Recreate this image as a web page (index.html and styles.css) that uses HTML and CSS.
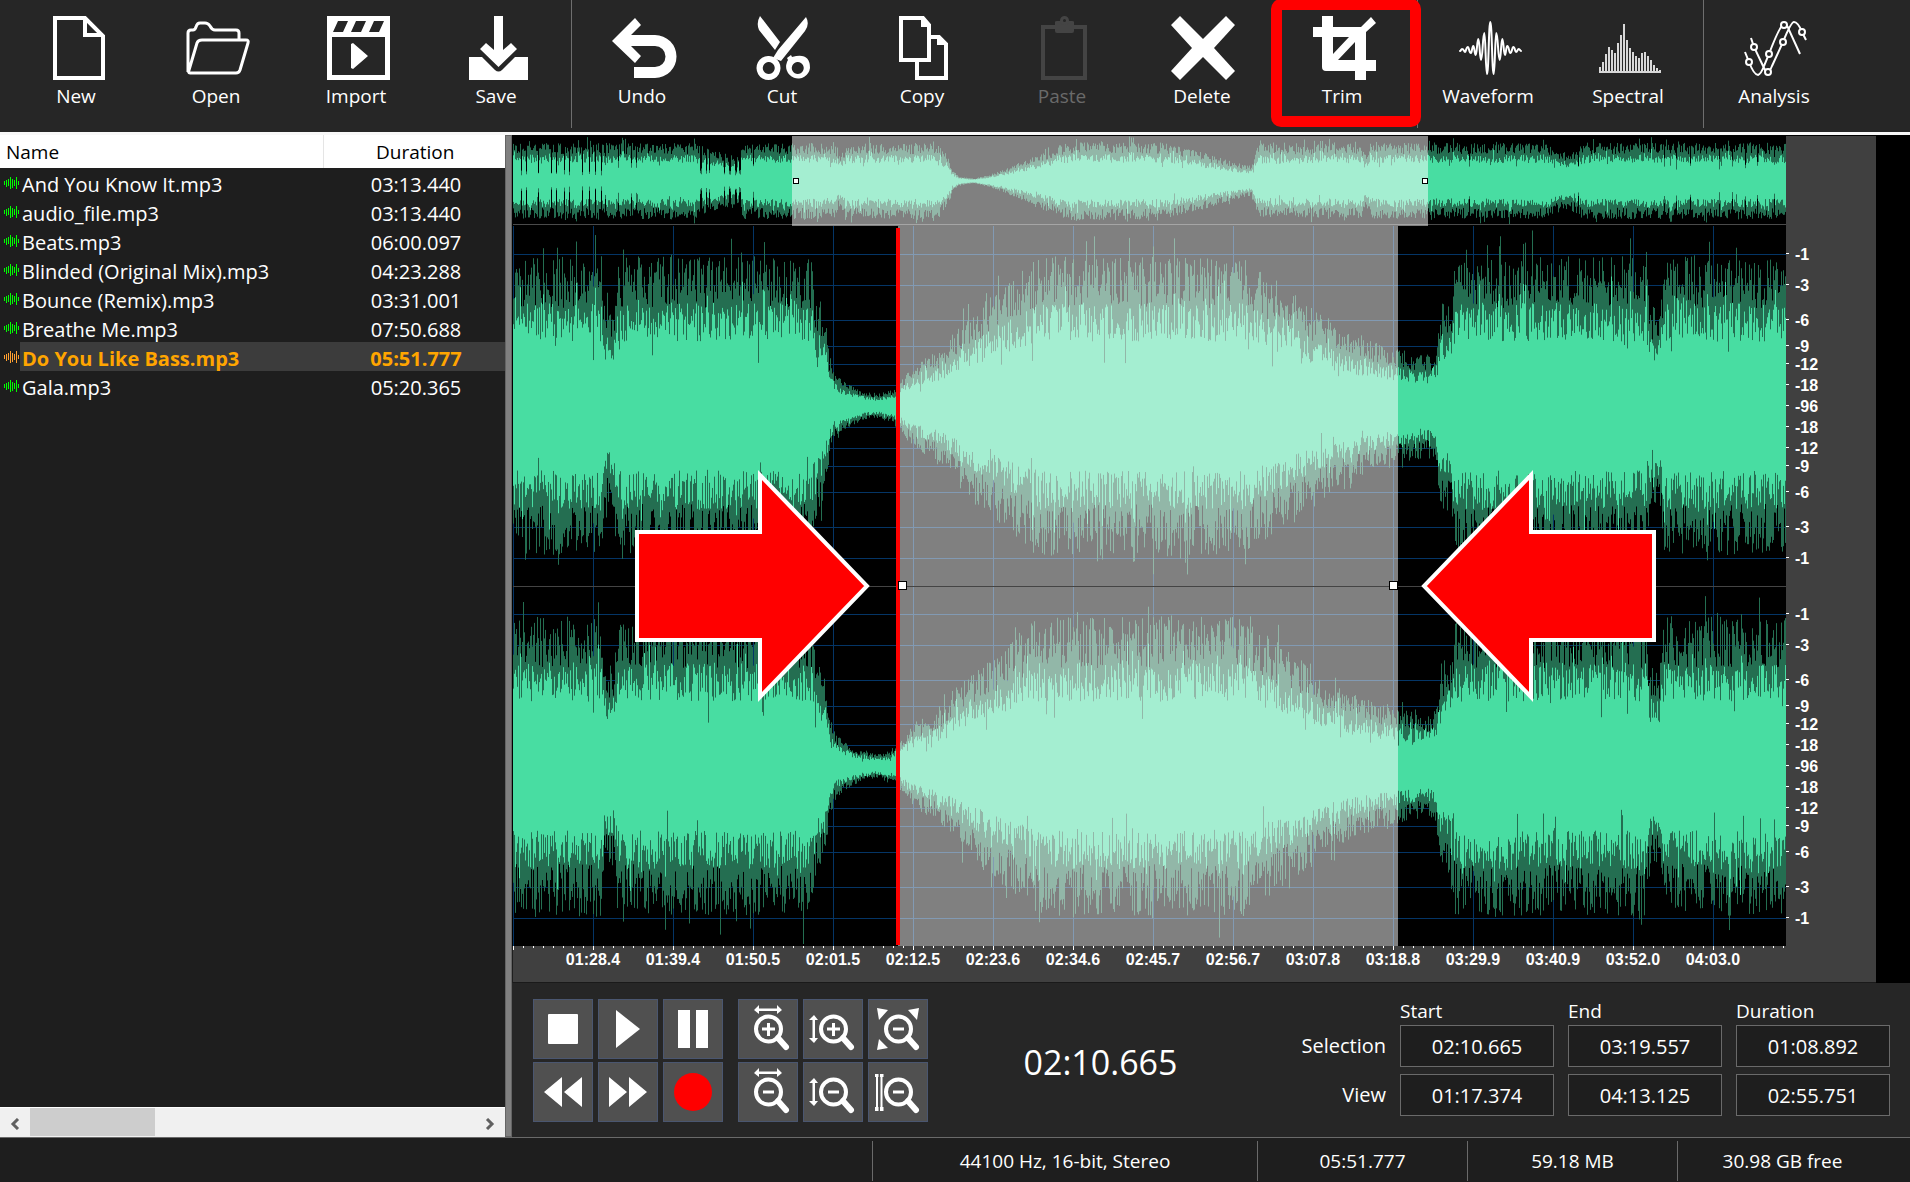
FILE: index.html
```
<!DOCTYPE html>
<html lang="en">

<head>
  <meta charset="UTF-8">
  <meta name="viewport" content="width=device-width, initial-scale=1.0">
  <title>Audio Editor</title>
  <link rel="stylesheet" href="styles.css">
</head>

<body>
  <header class="toolbar">
    <div class="group">
      <button class="tool"><svg viewBox="0 0 64 64" class="line">
          <path stroke-width="4" d="M11 2H41L59 20V62H11ZM41 2V19H59" />
        </svg>New</button>
      <button class="tool"><svg viewBox="0 0 64 64" class="line">
          <path stroke-width="3" stroke-linejoin="round" d="M4 56V17Q4 14 7 14H9Q11 14 12 11Q13 7 16 7H21Q24 7 26 10Q28 14 31 14H52Q55 14 55 17V23M18 24H62Q65 24 64 27L56 54Q55 57 52 57H6Q4 57 5 54L13 27Q14 24 18 24Z" />
        </svg>Open</button>
      <button class="tool"><svg viewBox="0 0 64 64">
          <path fill-rule="evenodd" d="M3 0H66V64H3ZM8 21V59H61V21ZM9 16H19L24 5H14ZM27 16H37L42 5H32ZM45 16H55L60 5H50ZM27 28L29 27 44 40 29 53 27 52Z" />
        </svg>Import</button>
      <button class="tool"><svg viewBox="0 0 64 64">
          <path d="M30 0H39V34L47 27 53 33 34.5 51 16 33 22 27 30 34ZM5 41H18L31 54Q34.5 57 38 54L51 41H64V64H5Z" />
        </svg>Save</button>
    </div>
    <div class="group">
      <button class="tool"><svg viewBox="0 0 64 64">
          <path d="M2 25L25 2 31 9 21 19H45A21.5 21.5 0 0 1 45 62H24V51H45A10 10 0 0 0 45 30H21L31 40 25 47Z" />
        </svg>Undo</button>
      <button class="tool"><svg viewBox="0 0 64 64">
          <path d="M10 0L30 26 25 34 9 14Q6 7 10 0ZM56 1Q60 8 55 15L31 45 23 42 28 34Z" />
          <path fill-rule="evenodd" d="M19 40A12 12 0 1 1 18 40ZM18.5 46A6 6 0 1 0 19 46ZM38 44L37 42 41 39 42 41Q60 36 60 52A12 12 0 1 1 38 44ZM47.5 46A6 6 0 1 0 48 46Z" />
        </svg>Cut</button>
      <button class="tool"><svg viewBox="0 0 64 64" class="line">
          <path stroke-width="4" d="M11 2H33L39 9V44H11ZM27 45V62H56V28L49 21H41" />
          <path class="solid" d="M31 1V11H41ZM47 20V29H58Z" />
        </svg>Copy</button>
      <button class="tool" disabled><svg viewBox="0 0 64 64" class="line">
          <path stroke-width="4" d="M13 11H55V62H13Z" />
          <path class="solid" d="M25 6Q25 5 27 5H42Q44 5 44 6V15Q44 17 42 17H27Q25 17 25 15Z" />
          <circle cx="34.5" cy="4.5" r="3" stroke-width="3" class="hole" />
        </svg>Paste</button>
      <button class="tool"><svg viewBox="0 0 64 64">
          <path d="M10 0L33 23 56 0 65 9 44 32 65 55 56 64 33 41 10 64 1 55 22 32 1 9Z" />
        </svg>Delete</button>
      <button class="tool marked"><svg viewBox="0 0 64 64">
          <path fill-rule="evenodd" d="M12 0H23V11H51L61 1 66 7 56 16V44H66V55H56V64H45V55H16Q12 55 12 51V21H3V11H12ZM23 21V38L39 21ZM45 26L28 44H45Z" />
        </svg>Trim</button>
    </div>
    <div class="group">
      <button class="tool"><svg viewBox="0 0 64 64" class="line">
          <path stroke-width="2" stroke-linecap="round" d="M4 35C5 35 5 33 6 33C8 33 8 36 9 36C10 36 10 31 12 31C13 31 13 37 15 37C16 37 16 30 17.3 30C18.5 30 18.5 39 19.7 39C21 39 21 23 22.3 23C23.7 23 23.7 44 25 44C26.7 44 26.7 17 28.3 17C29.6 17 29.6 58 31 58C32.7 58 32.7 6 34.3 6C36 6 36 58 37.7 58C39 58 39 17 40.3 17C42 17 42 44 43.7 44C45 44 45 23 46.3 23C47.6 23 47.6 39 49 39C50 39 50 30 51.3 30C53 30 53 37 54.3 37C56 37 56 31 57.3 31C59 31 59 36 60 36C61.5 36 61.5 33 62.7 33C64 33 64 35 65 35" />
        </svg>Waveform</button>
      <button class="tool"><svg viewBox="0 0 64 64" class="line">
          <path stroke="#d8d8d8" stroke-width="2" d="M4 56V51M7 56V46M10 56V38M13 56V31M16 56V34M19 56V37M22 56V27M25 56V19M28 56V8M31 56V24M34 56V32M37 56V36M40 56V40M43 56V42M46 56V37M49 56V36M52 56V40M55 56V44M58 56V49M61 56V52M64 56V54M3 56H65" />
        </svg>Spectral</button>
    </div>
    <div class="group">
      <button class="tool"><svg viewBox="0 0 64 64" class="line">
          <path stroke-width="2" d="M3 36L7 46Q12 59 16 59Q19 58 22 50L27 38Q38 9 42 8Q45 8 47 14L58 38M9 22L12 31 22 52Q24 56 26 56Q28 55 30 50L41 26Q49 6 52 6Q56 6 60 16L64 24" />
          <g class="hole" stroke-width="2">
            <circle cx="7" cy="46" r="3" />
            <circle cx="12" cy="31" r="3" />
            <circle cx="26" cy="56" r="3" />
            <circle cx="27" cy="38" r="3" />
            <circle cx="41" cy="26" r="3" />
            <circle cx="42" cy="9" r="3" />
            <circle cx="60" cy="16" r="3" />
          </g>
        </svg>Analysis</button>
    </div>
  </header>

  <main class="workspace">
    <section class="files">
      <table class="file-list">
        <colgroup>
          <col class="col-icon">
          <col>
          <col class="col-duration">
        </colgroup>
        <thead>
          <tr>
            <th colspan="2" class="name">Name</th>
            <th>Duration</th>
          </tr>
        </thead>
        <tbody id="files"></tbody>
      </table>
      <div class="scrollbar">
        <button aria-label="Scroll left"><svg viewBox="0 0 10 12"><path d="M8 1L3 6 8 11" /></svg></button>
        <span class="thumb"></span>
        <button aria-label="Scroll right"><svg viewBox="0 0 10 12"><path d="M2 1L7 6 2 11" /></svg></button>
      </div>
    </section>
    <div class="splitter"></div>

    <section class="editor">
      <div class="view">
        <div class="tracks">
          <div class="overview">
            <canvas id="overview"></canvas>
            <div class="selection range"></div>
          </div>
          <div class="wave">
            <canvas id="wave"></canvas>
            <div class="selection"></div>
            <div class="middle"></div>
            <div class="playhead"></div>
            <i class="handle start"></i>
            <i class="handle end"></i>
            <svg class="arrow from-left" viewBox="0 0 236 232">
              <path d="M2 62H125V5L232 116 125 227V170H2Z" />
            </svg>
            <svg class="arrow from-right" viewBox="0 0 236 232">
              <path d="M234 62H111V5L4 116 111 227V170H234Z" />
            </svg>
          </div>
        </div>
        <div class="db-ruler" id="db"></div>
      </div>
      <div class="time-ruler" id="times"></div>

      <div class="controls">
        <div class="pad">
          <button class="key" aria-label="Stop"><svg viewBox="0 0 60 60"><rect x="15" y="15" width="30" height="30" rx="1" /></svg></button>
          <button class="key" aria-label="Play"><svg viewBox="0 0 60 60"><path d="M18 11L42 30 18 49Z" /></svg></button>
          <button class="key" aria-label="Pause"><svg viewBox="0 0 60 60"><path d="M15 11H27V49H15ZM33 11H45V49H33Z" /></svg></button>
          <button class="key" aria-label="Rewind"><svg viewBox="0 0 60 60"><path d="M11 30L29 15V45ZM31 30L49 15V45Z" /></svg></button>
          <button class="key" aria-label="Fast forward"><svg viewBox="0 0 60 60"><path d="M49 30L31 15V45ZM29 30L11 15V45Z" /></svg></button>
          <button class="key" aria-label="Record"><svg viewBox="0 0 60 60"><circle class="rec" cx="30" cy="30" r="19" /></svg></button>
        </div>
        <div class="pad">
          <button class="key" aria-label="Zoom in horizontally"><svg viewBox="0 0 60 60">
              <path class="lens" d="M43 30A12.5 12.5 0 1 1 18 30A12.5 12.5 0 1 1 43 30" />
              <path class="grip" d="M40 39L48 48" />
              <path class="sign" d="M24 30H37M30.5 24V37" />
              <path d="M16 11L21 6V9.5H39V6L44 11 39 15V12H21V15Z" />
            </svg></button>
          <button class="key" aria-label="Zoom in vertically"><svg viewBox="0 0 60 60">
              <path class="lens" d="M43 30A12.5 12.5 0 1 1 18 30A12.5 12.5 0 1 1 43 30" />
              <path class="grip" d="M40 39L48 48" />
              <path class="sign" d="M24 30H37M30.5 24V37" />
              <path d="M11 16L15 21H12V39H15L11 44 6 39H9.5V21H6Z" />
            </svg></button>
          <button class="key" aria-label="Zoom out full"><svg viewBox="0 0 60 60">
              <path class="lens" d="M43 30A12.5 12.5 0 1 1 18 30A12.5 12.5 0 1 1 43 30" />
              <path class="grip" d="M40 39L48 48" />
              <path class="sign" d="M25 30H36" />
              <path d="M9 9L20 11 11 21ZM51 9L49 21 40 11ZM9 51L11 40 20 49Z" />
            </svg></button>
          <button class="key" aria-label="Zoom out horizontally"><svg viewBox="0 0 60 60">
              <path class="lens" d="M43 30A12.5 12.5 0 1 1 18 30A12.5 12.5 0 1 1 43 30" />
              <path class="grip" d="M40 39L48 48" />
              <path class="sign" d="M25 30H36" />
              <path d="M16 11L21 6V9.5H39V6L44 11 39 15V12H21V15Z" />
            </svg></button>
          <button class="key" aria-label="Zoom out vertically"><svg viewBox="0 0 60 60">
              <path class="lens" d="M43 30A12.5 12.5 0 1 1 18 30A12.5 12.5 0 1 1 43 30" />
              <path class="grip" d="M40 39L48 48" />
              <path class="sign" d="M25 30H36" />
              <path d="M11 16L15 21H12V39H15L11 44 6 39H9.5V21H6Z" />
            </svg></button>
          <button class="key" aria-label="Zoom to selection"><svg viewBox="0 0 60 60">
              <path class="lens" d="M43 30A12.5 12.5 0 1 1 18 30A12.5 12.5 0 1 1 43 30" />
              <path class="grip" d="M40 39L48 48" />
              <path class="sign" d="M25 30H36" />
              <path d="M7 12H10.5V15H10V45H10.5V49H7V45H8V15H7ZM12 12H15.5V15H14.5V45H15.5V49H12V45H12.5V15H12Z" />
            </svg></button>
        </div>
        <output class="position">02:10.665</output>
        <div class="ranges">
          <span></span>
          <span class="head" id="start">Start</span>
          <span class="head" id="end">End</span>
          <span class="head" id="duration">Duration</span>
          <span class="side" id="selection">Selection</span>
          <input type="text" value="02:10.665" aria-labelledby="selection start">
          <input type="text" value="03:19.557" aria-labelledby="selection end">
          <input type="text" value="01:08.892" aria-labelledby="selection duration">
          <span class="side" id="view">View</span>
          <input type="text" value="01:17.374" aria-labelledby="view start">
          <input type="text" value="04:13.125" aria-labelledby="view end">
          <input type="text" value="02:55.751" aria-labelledby="view duration">
        </div>
      </div>
    </section>
  </main>

  <footer class="status">
    <span></span>
    <span>44100 Hz, 16-bit, Stereo</span>
    <span>05:51.777</span>
    <span>59.18 MB</span>
    <span>30.98 GB free</span>
  </footer>

  <script src="script.js"></script>
</body>

</html>
```
FILE: styles.css
```
*,
*::before,
*::after {
  margin: 0;
  padding: 0;
  box-sizing: border-box;
}

body {
  display: flex;
  flex-direction: column;
  height: 100vh;
  overflow: hidden;
  background: #1e1e1e;
  color: #fff;
  font-family: "Open Sans", "Noto Sans", sans-serif;
  font-size: 19px;
}

button,
input {
  font: inherit;
  color: inherit;
}

/* toolbar */
.toolbar {
  display: flex;
  flex: none;
  height: 135px;
  padding-left: 6px;
  background: #262626;
  border-bottom: 3px solid #f8f8f8;
}

.group {
  display: flex;
  height: 128px;
  padding-right: 5px;
  border-right: 1px solid #6e6e6e;
}

.group:last-child {
  border-right: 0;
}

.tool {
  position: relative;
  display: flex;
  flex-direction: column;
  align-items: center;
  gap: 3px;
  width: 140px;
  padding-top: 16px;
  border: 0;
  background: none;
  line-height: 26px;
}

.tool svg {
  width: 64px;
  height: 64px;
  overflow: visible;
  fill: #fff;
}

.tool .line {
  fill: none;
  stroke: #fff;
}

.line .solid {
  fill: #fff;
  stroke: none;
}

.line .hole {
  fill: #262626;
}

.tool:disabled {
  color: #6a6a6a;
}

.tool:disabled .line {
  stroke: #444;
}

.tool:disabled .solid {
  fill: #444;
}

.marked::after {
  content: "";
  position: absolute;
  z-index: 1;
  top: -1px;
  left: -1px;
  width: 150px;
  height: 128px;
  border: 11px solid #f00;
  border-radius: 10px;
}

/* file list */
.workspace {
  display: flex;
  flex: 1;
  min-height: 0;
  border-bottom: 1px solid #6a6a6a;
}

.files {
  display: flex;
  flex-direction: column;
  justify-content: space-between;
  flex: 0 0 505px;
}

.file-list {
  width: 100%;
  table-layout: fixed;
  border-collapse: collapse;
}

.col-icon {
  width: 20px;
}

.col-duration {
  width: 182px;
}

.file-list th {
  height: 33px;
  padding-left: 2px;
  background: #fff;
  color: #000;
  font-weight: 400;
}

.file-list .name {
  padding-left: 6px;
  border-right: 1px solid #e5e5e5;
  text-align: left;
}

.file-list td {
  height: 29px;
  padding: 4px 0 0 2px;
  font-size: 20px;
  line-height: 25px;
  white-space: nowrap;
}

.file-list td:last-child {
  padding-left: 4px;
  text-align: center;
}

.file-list svg {
  display: block;
  width: 16px;
  height: 14px;
  margin: 0 0 4px 2px;
  fill: none;
  stroke: #0f0;
}

.file-list .current {
  color: #ffa500;
  font-weight: 700;
}

.current td + td {
  background: #3c3c3c;
}

.file-list .current svg {
  stroke: #ffa030;
}

.scrollbar {
  display: flex;
  height: 30px;
  border-top: 1px solid #fff;
  background: #f0f0f0;
}

.scrollbar button {
  width: 30px;
  border: 0;
  background: none;
}

.scrollbar button:last-child {
  margin-left: auto;
}

.scrollbar svg {
  width: 10px;
  height: 12px;
  fill: none;
  stroke: #606060;
  stroke-width: 3;
}

.thumb {
  width: 125px;
  margin-bottom: 1px;
  background: #cdcdcd;
}

.splitter {
  flex: none;
  width: 7px;
  border: 1px solid #646464;
  background: #808080;
}

/* waveform */
.editor {
  display: flex;
  flex: 1;
  flex-direction: column;
  min-width: 0;
}

.view {
  display: flex;
  flex: 1;
  min-height: 0;
  padding: 1px 34px 0 1px;
  background: #000;
}

.tracks {
  display: flex;
  flex: 1;
  flex-direction: column;
  min-width: 0;
}

.overview,
.wave {
  position: relative;
}

.overview {
  height: 90px;
}

.wave {
  flex: 1;
  min-height: 0;
}

canvas {
  position: absolute;
  width: 100%;
  height: 100%;
}

.selection {
  position: absolute;
  top: 0;
  bottom: 0;
  left: 30.24%;
  width: 39.28%;
  background: rgba(255, 255, 255, .5);
}

.range {
  left: 21.92%;
  width: 49.96%;
}

.range::before,
.range::after {
  content: "";
  position: absolute;
  top: 42px;
  left: 1px;
  width: 6px;
  height: 6px;
  border: 1px solid #000;
  background: #fff;
}

.range::after {
  left: auto;
  right: 0;
}

.middle {
  position: absolute;
  top: 50%;
  width: 100%;
  height: 1px;
  background: #444;
}

.playhead {
  position: absolute;
  top: 2px;
  bottom: 1px;
  left: 30.1%;
  width: 4px;
  background: #f00;
}

.handle {
  position: absolute;
  top: 50%;
  left: 30.24%;
  width: 9px;
  height: 9px;
  margin-top: -5px;
  border: 1px solid #000;
  background: #fff;
}

.handle.end {
  left: auto;
  right: 30.48%;
}

.arrow {
  position: absolute;
  top: 50%;
  width: 236px;
  height: 232px;
  margin-top: -116px;
  fill: #f00;
  stroke: #fff;
  stroke-width: 4;
}

.from-left {
  left: 9.6%;
}

.from-right {
  left: 71.25%;
}

.db-ruler,
.time-ruler {
  background: #404040;
  font: bold 16px/20px "Liberation Sans", Arial, sans-serif;
}

.db-ruler {
  position: relative;
  flex: 0 0 90px;
}

.db-ruler span {
  position: absolute;
  padding-left: 9px;
  margin-top: -9px;
}

.db-ruler span::before {
  content: "";
  position: absolute;
  top: 8px;
  left: 0;
  width: 3px;
  height: 1px;
  background: #fff;
}

.time-ruler {
  display: flex;
  flex: none;
  height: 37px;
  margin: 0 34px 0 1px;
  padding-left: 40px;
  border-bottom: 1px solid #1a1a1a;
  background-image: repeating-linear-gradient(90deg, #fff 0 1px, transparent 1px 80px), repeating-linear-gradient(90deg, #fff 0 1px, transparent 1px 10px);
  background-repeat: no-repeat;
  background-size: 1273px 4px, 1273px 2px;
  box-shadow: 34px 0 #000;
}

.time-ruler span {
  flex: 0 0 80px;
  padding-top: 4px;
  text-align: center;
}

/* transport */
.controls {
  display: flex;
  flex: none;
  height: 154px;
  padding: 16px 20px 0 21px;
  background: #262626;
}

.pad {
  display: grid;
  grid-template-columns: repeat(3, 60px);
  grid-auto-rows: 60px;
  gap: 3px 5px;
  height: 123px;
  margin-right: 15px;
}

.key {
  border: 1px solid #4a5670;
  background: #505050;
}

.key svg {
  display: block;
  width: 60px;
  height: 60px;
  margin: -1px;
  fill: #fff;
}

.lens,
.grip,
.sign {
  fill: none;
  stroke: #fff;
  stroke-width: 4;
}

.grip {
  stroke-width: 6;
  stroke-linecap: round;
}

.sign {
  stroke-width: 3;
}

.rec {
  fill: #f00;
}

.position {
  flex: 1;
  padding-right: 28px;
  font-size: 34px;
  line-height: 126px;
  text-align: center;
}

.ranges {
  display: grid;
  grid-template-columns: 100px repeat(3, 154px);
  grid-template-rows: 26px 42px 42px;
  gap: 7px 14px;
  margin-top: -7px;
}

.head {
  padding-top: 6px;
  line-height: 26px;
}

.side {
  font-size: 20px;
  line-height: 42px;
  text-align: right;
}

.ranges input {
  width: 100%;
  border: 1px solid #6a6a6a;
  background: #1e1e1e;
  font-size: 20px;
  text-align: center;
}

/* status bar */
.status {
  display: grid;
  flex: none;
  grid-template-columns: 1fr 385px repeat(3, 210px);
  height: 44px;
  padding: 3px 23px 3px 0;
  background: #1e1e1e;
  line-height: 40px;
}

.status span {
  text-align: center;
}

.status span + span {
  border-left: 1px solid #6a6a6a;
}
```
FILE: script.js
```
const files = [
  ['And You Know It.mp3', '03:13.440'],
  ['audio_file.mp3', '03:13.440'],
  ['Beats.mp3', '06:00.097'],
  ['Blinded (Original Mix).mp3', '04:23.288'],
  ['Bounce (Remix).mp3', '03:31.001'],
  ['Breathe Me.mp3', '07:50.688'],
  ['Do You Like Bass.mp3', '05:51.777'],
  ['Gala.mp3', '05:20.365']
];
const current = 6;
const icon = '<svg viewBox="0 0 16 14"><path d="M.5 5V9M2.5 4V11M4.5 3V10M6.5 1V13M8.5 3V12M10.5 4V10M12.5 1V13M14.5 5V9"/></svg>';
document.getElementById('files').innerHTML = files.map((f, i) =>
  `<tr${i === current ? ' class="current"' : ''}><td>${icon}</td><td>${f[0]}</td><td>${f[1]}</td></tr>`).join('');

const times = ['01:28.4', '01:39.4', '01:50.5', '02:01.5', '02:12.5', '02:23.6', '02:34.6', '02:45.7',
  '02:56.7', '03:07.8', '03:18.8', '03:29.9', '03:40.9', '03:52.0', '04:03.0'];
document.getElementById('times').innerHTML = times.map(t => `<span>${t}</span>`).join('');

// dB marks: label and distance from the channel centre (channel half is 180)
const marks = [[-1, 152], [-3, 121], [-6, 86], [-9, 60], [-12, 42], [-18, 21]];
const levels = marks.map(m => [m[0], -m[1]]).concat([[-96, 0]], marks.slice().reverse());
let db = '';
for (const centre of [180, 540]) {
  for (const [label, y] of levels) {
    db += `<span style="top: calc(90px + (100% - 90px) * ${(centre + y) / 720})">${label}</span>`;
  }
}
document.getElementById('db').innerHTML = db;

// loudness envelopes, x is in 0..1273
const waveEnv = [[0, 1], [88, 1], [91, .66], [101, .68], [104, 1], [298, 1], [302, .76], [311, .65], [316, .35],
  [320, .24], [330, .17], [345, .11], [362, .08], [380, .11], [388, .18], [400, .28], [427, .38], [447, .55],
  [480, .75], [527, 1], [730, 1], [787, .72], [827, .52], [857, .44], [885, .38], [917, .34], [923, .42],
  [928, .7], [938, .75], [942, 1], [1132, 1], [1137, .68], [1146, .65], [1151, 1], [1273, 1]];
const overEnv = [[0, 1], [180, 1], [215, .7], [226, .75], [229, 1], [322, 1], [325, .7], [330, .8], [333, 1],
  [425, 1], [436, .55], [439, .28], [446, .12], [460, .06], [475, .16], [492, .32], [517, .6], [542, .9],
  [560, 1.04], [650, 1], [690, .75], [720, .5], [738, .4], [744, .95], [848, 1], [851, .72], [855, .75], [857, 1],
  [1035, 1], [1045, .78], [1060, .76], [1068, 1], [1273, 1]];

function envelope(points, x) {
  let i = 1;
  while (i < points.length - 1 && points[i][0] < x) i++;
  const [x0, y0] = points[i - 1];
  const [x1, y1] = points[i];
  return y0 + (y1 - y0) * (x - x0) / (x1 - x0);
}

// fixed seed, so the wave does not change on resize
function random(seed) {
  return () => {
    seed = (seed * 1664525 + 1013904223) % 4294967296;
    return seed / 4294967296;
  };
}

// rough is how far the single columns stray from the envelope
function channel(ctx, width, centre, half, env, seed, rough, gap) {
  const rnd = random(seed);
  for (let x = 0; x < width; x++) {
    const pos = x / width * 1273;
    const e = envelope(env, pos) * half;
    const cut = gap(pos, rnd());
    for (const dir of [-1, 1]) {
      const n = rnd();
      const spike = rnd();
      let peak = .7 + rough * (n * .24 - .13);
      let body = .49 + rough * (rnd() * .18 - .11);
      if (spike > .88) {
        const extra = rnd() * rough;
        peak += extra * .14;
        body += extra * .14;
      } else if (spike < .03) {
        body -= .1 * rough;
      }
      peak = Math.max(peak, body) * e * cut;
      body *= e * cut;
      ctx.fillStyle = '#246e51';
      ctx.fillRect(x, dir < 0 ? centre - peak : centre, 1, Math.max(1, peak));
      ctx.fillStyle = '#48dda2';
      ctx.fillRect(x, dir < 0 ? centre - body : centre, 1, Math.max(1, body));
    }
  }
}

function setup(id) {
  const canvas = document.getElementById(id);
  canvas.width = canvas.clientWidth;
  canvas.height = canvas.clientHeight;
  return [canvas.getContext('2d'), canvas.width, canvas.height];
}

function draw() {
  let [ctx, w, h] = setup('overview');
  const beats = [8, 13, 25, 38, 43, 51, 56, 69, 76, 82, 88, 92, 105, 118, 123, 240, 956, 1065, 1151, 1163, 1177, 1206, 1219, 1232, 1244, 1261];
  channel(ctx, w, h / 2, 47, overEnv, 7, 1, (x, r) => {
    if (x > 185 && x < 228) return r > .7 ? .15 + r * .3 : 1;
    return beats.includes(Math.round(x)) ? (x < 92 ? .3 : .6) : 1;
  });
  ctx.fillStyle = '#4a4a4a';
  ctx.fillRect(0, h - 2, w, 1);

  [ctx, w, h] = setup('wave');
  const scale = h / 720;
  ctx.fillStyle = '#043566';
  for (let x = 0; x < w; x += 80) ctx.fillRect(x, 0, 1, h);
  for (const centre of [180, 540]) {
    for (const [, y] of levels) ctx.fillRect(0, Math.round((centre + y) * scale), w, 1);
  }
  channel(ctx, w, 180 * scale, 180 * scale, waveEnv, 21, 1.2, () => 1);
  channel(ctx, w, 540 * scale, 180 * scale, waveEnv, 99, 1.2, () => 1);
}

draw();
window.addEventListener('resize', draw);
```
